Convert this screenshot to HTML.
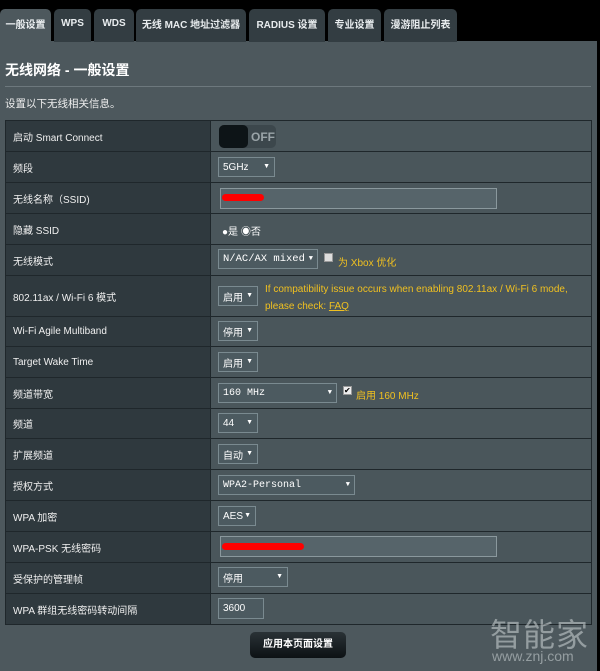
<!DOCTYPE html>
<html><head><meta charset="utf-8"><style>
*{margin:0;padding:0;box-sizing:border-box}
body{width:600px;height:671px;background:#000;position:relative;overflow:hidden;font-family:"Liberation Sans","Noto Sans CJK SC",sans-serif;color:#fff;font-size:10px}
.tab{position:absolute;top:9px;height:33px;background:#333d42;border-radius:5px 5px 0 0;color:#e8ecee;font-size:10px;font-weight:bold;display:flex;align-items:center;justify-content:center;padding-bottom:4px}
.tab.act{background:#4d585d}
#panel{position:absolute;left:0;top:41px;width:597px;height:630px;background:#4d585d}
.h1{position:absolute;left:5px;top:60px;font-size:14px;font-weight:bold;color:#fff}
.hr{position:absolute;left:5px;top:86px;width:586px;height:1px;background:#6d787d}
.sub{position:absolute;left:5px;top:96px;font-size:10.5px;color:#eee}
.tbl{position:absolute;left:5px;top:120px;width:587px;height:505px;background:#1f272b}
.lab{position:absolute;left:6px;width:204px;background:#2f393e;font-size:10px;padding-left:7px;color:#f0f0f0;display:flex;align-items:center}
.val{position:absolute;left:211px;width:380px;background:#4a565b}
.sel{position:absolute;left:218px;height:20px;background:#4c5a60;border:1px solid #7a8a90;font-size:10px;padding-left:4px;color:#fff;display:flex;align-items:center}
.sel .ar{position:absolute;right:4px;top:5px;font-size:7px}
.mono{font-family:"Liberation Mono",monospace}
.inp{position:absolute;left:220px;width:277px;height:21px;background:#56646a;border:1px solid #8a989d}
.red{position:absolute;background:#f00;border-radius:4px}
.y{color:#f0c020;position:absolute;font-size:10px}
.cb{position:absolute;width:9px;height:9px;background:#ddd;border:1px solid #999}
</style></head><body>
<div id="panel"></div>
<div class="tab act" style="left:0;width:51px">一般设置</div>
<div class="tab" style="left:54px;width:37px">WPS</div>
<div class="tab" style="left:94px;width:40px">WDS</div>
<div class="tab" style="left:136px;width:110px">无线 MAC 地址过滤器</div>
<div class="tab" style="left:249px;width:76px">RADIUS 设置</div>
<div class="tab" style="left:328px;width:53px">专业设置</div>
<div class="tab" style="left:384px;width:73px">漫游阻止列表</div>
<div class="h1">无线网络 - 一般设置</div>
<div class="hr"></div>
<div class="sub">设置以下无线相关信息。</div>
<div class="tbl"></div>

<div class="lab" style="top:121px;height:30px">启动 Smart Connect</div><div class="val" style="top:121px;height:30px"></div>
<div class="lab" style="top:152px;height:30px">频段</div><div class="val" style="top:152px;height:30px"></div>
<div class="lab" style="top:183px;height:30px">无线名称（SSID)</div><div class="val" style="top:183px;height:30px"></div>
<div class="lab" style="top:214px;height:30px">隐藏 SSID</div><div class="val" style="top:214px;height:30px"></div>
<div class="lab" style="top:245px;height:30px">无线模式</div><div class="val" style="top:245px;height:30px"></div>
<div class="lab" style="top:276px;height:40px">802.11ax / Wi-Fi 6 模式</div><div class="val" style="top:276px;height:40px"></div>
<div class="lab" style="top:317px;height:29px">Wi-Fi Agile Multiband</div><div class="val" style="top:317px;height:29px"></div>
<div class="lab" style="top:347px;height:30px">Target Wake Time</div><div class="val" style="top:347px;height:30px"></div>
<div class="lab" style="top:378px;height:30px">频道带宽</div><div class="val" style="top:378px;height:30px"></div>
<div class="lab" style="top:409px;height:29px">频道</div><div class="val" style="top:409px;height:29px"></div>
<div class="lab" style="top:439px;height:30px">扩展频道</div><div class="val" style="top:439px;height:30px"></div>
<div class="lab" style="top:470px;height:30px">授权方式</div><div class="val" style="top:470px;height:30px"></div>
<div class="lab" style="top:501px;height:30px">WPA 加密</div><div class="val" style="top:501px;height:30px"></div>
<div class="lab" style="top:532px;height:30px">WPA-PSK 无线密码</div><div class="val" style="top:532px;height:30px"></div>
<div class="lab" style="top:563px;height:30px">受保护的管理帧</div><div class="val" style="top:563px;height:30px"></div>
<div class="lab" style="top:594px;height:30px">WPA 群组无线密码转动间隔</div><div class="val" style="top:594px;height:30px"></div>

<div style="position:absolute;left:219px;top:125px;width:57px;height:23px;background:#3c474c;border-radius:5px"></div>
<div style="position:absolute;left:219px;top:125px;width:29px;height:23px;background:#0d1417;border-radius:5px"></div>
<div style="position:absolute;left:251px;top:130px;font-size:12px;color:#9aa4a8;font-weight:bold">OFF</div>

<div class="sel" style="top:157px;width:57px">5GHz<span class="ar">▼</span></div>
<div class="inp" style="top:188px"></div><div class="red" style="left:222px;top:194px;width:42px;height:7px"></div>
<div style="position:absolute;left:222px;top:223px;font-size:10px">●是 <span>◉</span>否</div>
<div class="sel mono" style="top:249px;width:100px;font-size:10.5px">N/AC/AX mixed<span class="ar">▼</span></div>
<div class="cb" style="left:324px;top:253px"></div><div class="y" style="left:338px;top:254px">为 Xbox 优化</div>
<div class="sel" style="top:286px;width:40px">启用<span class="ar">▼</span></div>
<div class="y" style="left:265px;top:281px;line-height:17px">If compatibility issue occurs when enabling 802.11ax / Wi-Fi 6 mode,<br>please check: <u>FAQ</u></div>
<div class="sel" style="top:321px;width:40px">停用<span class="ar">▼</span></div>
<div class="sel" style="top:352px;width:40px">启用<span class="ar">▼</span></div>
<div class="sel mono" style="top:383px;width:119px">160 MHz<span class="ar">▼</span></div>
<div class="cb" style="left:343px;top:386px;background:#eee;font-size:8px;line-height:7px;color:#000">✔</div><div class="y" style="left:356px;top:387px">启用 160 MHz</div>
<div class="sel" style="top:413px;width:40px">44<span class="ar">▼</span></div>
<div class="sel" style="top:444px;width:40px">自动<span class="ar">▼</span></div>
<div class="sel mono" style="top:475px;width:137px">WPA2-Personal<span class="ar">▼</span></div>
<div class="sel" style="top:506px;width:38px">AES<span class="ar">▼</span></div>
<div class="inp" style="top:536px"></div><div class="red" style="left:222px;top:543px;width:82px;height:7px"></div>
<div class="sel" style="top:567px;width:70px">停用<span class="ar">▼</span></div>
<div class="sel" style="top:598px;width:46px;height:21px">3600</div>

<div style="position:absolute;left:250px;top:632px;width:96px;height:26px;background:linear-gradient(#2a3236,#0c1114);border-radius:5px;text-align:center;line-height:26px;font-size:10px;font-weight:bold">应用本页面设置</div>
<div style="position:absolute;left:490px;top:610px;font-size:32px;color:rgba(220,225,228,0.5);letter-spacing:1px">智能家</div>
<div style="position:absolute;left:492px;top:648px;font-size:14px;color:rgba(220,225,228,0.5)">www.znj.com</div>
</body></html>
